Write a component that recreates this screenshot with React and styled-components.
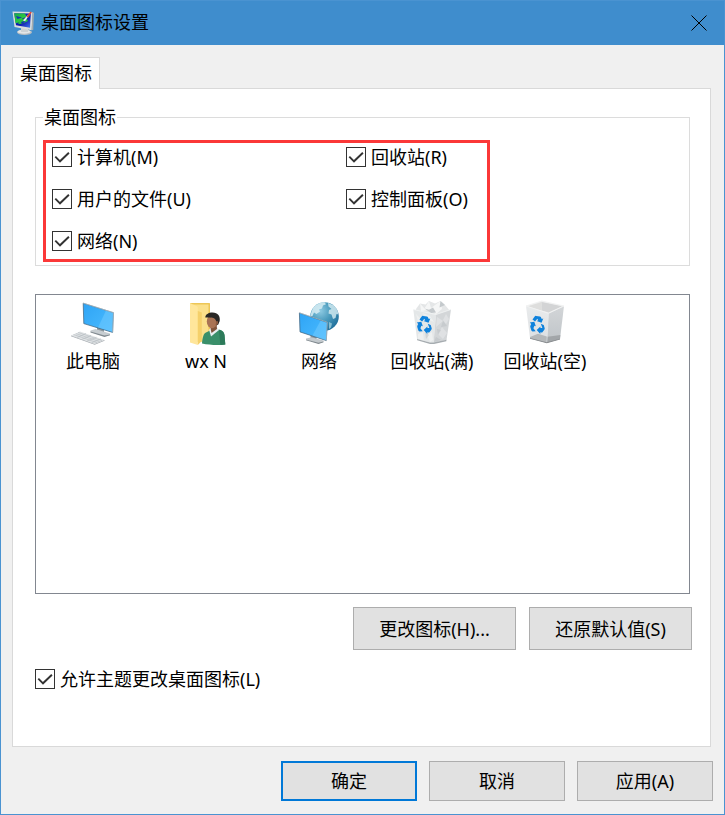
import React, { useState } from "react"
import styled, { createGlobalStyle } from "styled-components"


const GlobalStyle = createGlobalStyle`
  * {
    box-sizing: border-box;
  }
  body {
    margin: 0;
    font-family: "Noto Sans", "Noto Sans CJK SC", sans-serif;
    font-size: 18px;
    line-height: 24px;
    color: #000;
  }
  button, input {
    font: inherit;
    color: inherit;
  }
`

const Dialog = styled.div`
  display: flex;
  flex-direction: column;
  min-height: 100vh;
  background-color: #f0f0f0;
  border: 1px solid #4a93d1;
`

const TitleBar = styled.header`
  display: flex;
  align-items: center;
  height: 44px;
  padding: 0 11px;
  background-color: #3f8dcd;
`

const Title = styled.h1`
  flex: 1;
  margin: 0 0 0 5px;
  padding-bottom: 2px;
  font-size: 18px;
  font-weight: normal;
`

const CloseButton = styled.button`
  display: flex;
  align-items: center;
  justify-content: center;
  width: 28px;
  height: 28px;
  padding: 0;
  border: none;
  background: none;
`

const Content = styled.main`
  flex: 1;
  display: flex;
  flex-direction: column;
  padding: 12px 13px 0 11px;
`

const Tabs = styled.div`
  display: flex;
`

const Tab = styled.button`
  position: relative;
  height: 32px;
  margin-bottom: -1px;
  padding: 0 7px 2px;
  background-color: #fff;
  border: 1px solid #d9d9d9;
  border-bottom: none;
`

const Panel = styled.section`
  flex: 1;
  display: flex;
  flex-direction: column;
  padding: 16px 20px 55px 22px;
  background-color: #fff;
  border: 1px solid #d9d9d9;
`

const Group = styled.fieldset`
  min-width: 0;
  margin: 0 0 28px;
  padding: 11px 7px 3px;
  border: 1px solid #dcdcdc;
`

const Legend = styled.legend`
  padding: 0 1px;
`

const Highlight = styled.div`
  display: grid;
  grid-template-columns: 294px 1fr;
  row-gap: 18px;
  width: 70%;
  padding: 2px 0 6px 6px;
  border: 3px solid #fb3838;
`

const CheckLabel = styled.label`
  display: flex;
  align-items: center;
  gap: 5px;
  white-space: nowrap;
`

const Box = styled.span`
  display: grid;
  width: 20px;
  height: 20px;
`

const Input = styled.input`
  grid-area: 1 / 1;
  appearance: none;
  width: 20px;
  height: 20px;
  margin: 0;
  background-color: #fff;
  border: 1px solid #333;
`

const Tick = styled.svg`
  grid-area: 1 / 1;
  z-index: 1;
  pointer-events: none;
`

const IconList = styled.ul`
  flex: 1;
  display: grid;
  grid-template-columns: repeat(auto-fill, 112px);
  align-content: start;
  column-gap: 1px;
  margin: 0 0 13px;
  padding: 5px 0 0 1px;
  list-style-type: none;
  border: 1px solid #828790;
`

const IconItem = styled.li`
  display: flex;
  flex-direction: column;
  align-items: center;
  gap: 1px;
  white-space: nowrap;
`

const Actions = styled.div`
  display: flex;
  justify-content: flex-end;
  gap: 13px;
  margin: 0 -2px 17px 0;
`

const Footer = styled.footer`
  display: flex;
  justify-content: flex-end;
  gap: 12px;
  padding: 14px 11px 13px;
`

const Button = styled.button`
  width: ${props => props.$wide ? '163px' : '136px'};
  height: ${props => props.$wide ? '43px' : '40px'};
  padding: 0;
  background-color: #e1e1e1;
  border: ${props => props.$primary ? '2px solid #0078d7' : '1px solid #adadad'};
`


const AppIcon = () => (
  <svg width="24" height="26" viewBox="0 0 24 26" aria-hidden="true">
    <defs>
      <linearGradient id="app-screen" x1="0" y1="0" x2="1" y2="1">
        <stop offset="0" stopColor="#2540d8" />
        <stop offset="0.55" stopColor="#1018a8" />
        <stop offset="1" stopColor="#3f7cf0" />
      </linearGradient>
      <linearGradient id="app-leaf" x1="0" y1="0" x2="1" y2="1">
        <stop offset="0" stopColor="#1aa548" />
        <stop offset="1" stopColor="#35e23c" />
      </linearGradient>
    </defs>
    <ellipse cx="12.500" cy="22.300" rx="7.500" ry="2.700" fill="#b9bec1" />
    <ellipse cx="12" cy="21.700" rx="6.500" ry="2" fill="#e3e6e7" />
    <path d="M9 17l7 1v4H9z" fill="#cdd2d4" />
    <path d="M.5 1.500L20.500 2l-.8 18.300L2.500 17z" fill="#d9dddc" />
    <path d="M20.500 2l1.500 1-.8 17-1.500.3z" fill="#a5acaf" />
    <path d="M2.200 3.200L18.800 3.500 18 17.800 4 15.300z" fill="url(#app-screen)" />
    <path d="M2.200 3.200L13 3.400l1.500 3.600-4 1.200-1 2.800-3 1.500-3 .8z" fill="url(#app-leaf)" />
    <path d="M6 13.500c2-3.500 5-5.500 8.500-5l1.500 2.500c-2.500 1-6.500 3-8.500 3z" fill="#25c53c" />
    <path d="M4 6l6 1.500L5.500 9zM9 12l5-1.500-4 3.500z" fill="#132db9" />
    <path d="M11 10.500l5-6 1.200.8-4.200 6z" fill="#e6ebee" />
    <path d="M14.500 6.500l4-5 1.300.8-3.600 5.500z" fill="#dc4b3c" />
  </svg>
)

const Screen = ({ id, points, shine }) => (
  <>
    <defs>
      <linearGradient id={id} x1="0" y1="0" x2="1" y2="1">
        <stop offset="0" stopColor="#2ea4f5" />
        <stop offset="1" stopColor="#4cbcff" />
      </linearGradient>
    </defs>
    <polygon points={points} fill={`url(#${id})`} stroke="#3d5f78" strokeWidth="0.7" strokeLinejoin="round" />
    <polygon points={shine} fill="#79ceff" opacity="0.45" />
  </>
)

const ComputerIcon = () => (
  <svg width="48" height="48" viewBox="0 0 48 48" aria-hidden="true">
    <path d="M28 27l7 2v5l-7-2z" fill="#8d979d" />
    <path d="M21.500 30.500l5-1.500 14.500 4.500v1.500l-5.500 1.500-14-4.500z" fill="#c7cdd1" />
    <path d="M21.500 31.500l14 4 5.500-1v.800l-5.500 1.700-14-4.600z" fill="#818a90" />
    <Screen id="pc-screen" points="14.200,3.200 44.500,12.700 43.600,32.400 14.800,23.600" shine="44,13.200 43.200,31.700 29,27.500 37,10.600" />
    <path d="M14 3l30.500 9.700-.9 19.700" fill="none" stroke="#c0c9cf" strokeWidth="0.6" />
    <path d="M2 35.500l9-4 24.500 8.500-9.800 4z" fill="#e0e3e5" />
    <path d="M2 35.500l23.700 8.500 9.800-4v.8l-9.800 4L2 36.300z" fill="#a5abb0" />
    <path d="M4.500 34.500l23.800 8.300M6.800 33.500l23.900 8.200M9 32.400l24 8.200M8 37.500l9-4M13 39.300l9-3.900M18 41.100l9.500-3.900M22.500 42.800l9.500-3.900" stroke="#b4babf" strokeWidth="0.6" />
  </svg>
)

const UserIcon = () => (
  <svg width="48" height="48" viewBox="0 0 48 48" aria-hidden="true">
    <path d="M8 3h19.500q.5 0 .5.500V42H8z" fill="#edc657" />
    <path d="M11 4.500h15.500V42H11z" fill="#fbe08b" />
    <path d="M8 3l7.200 3.500q.6.300.6 1V45L8 42.500z" fill="#ffe69b" />
    <path d="M15.800 11l4 1.500V41l-4 4z" fill="#f5d06a" />
    <path d="M20 43.500c.5-6 1.500-10 4-11l4-2 8-1c4 .5 6 2 6.500 5.500l.8 9.500c-7 1-16 .5-23.300-1z" fill="#3a8f6a" />
    <path d="M37 29.800c3 .8 5 2.200 5.500 5.200l.8 9.500c-1.600.3-3.500.3-5 .3z" fill="#2d7a5a" />
    <path d="M27 29.500l2 7 8-6.500-2-3z" fill="#e9eef0" />
    <path d="M28 26l1.500 7 5.500-4-.5-6z" fill="#80543b" />
    <ellipse cx="30" cy="21.500" rx="5.200" ry="6.800" fill="#a97354" />
    <path d="M23.300 17.500c0-3 3.200-5 7.200-5 5.500 0 8 4 7.200 8.500l-1.400 3.500-2 1c.5-3 .3-4.500-1.300-6.500-1.500-1.700-5-1.300-9.700-1.500z" fill="#292725" />
    <path d="M34 21.500c1.500-1.500 3 .5 1.500 3l-1.800.7z" fill="#8b5a3e" />
  </svg>
)

const NetworkIcon = () => (
  <svg width="48" height="48" viewBox="0 0 48 48" aria-hidden="true">
    <defs>
      <radialGradient id="globe" cx="0.350" cy="0.300" r="0.750">
        <stop offset="0" stopColor="#8fcbe3" />
        <stop offset="0.500" stopColor="#4b9bbd" />
        <stop offset="1" stopColor="#206f9b" />
      </radialGradient>
    </defs>
    <circle cx="29.500" cy="16.500" r="14.300" fill="url(#globe)" />
    <path d="M18.500 7.500c3-3.500 7-5.300 11-5.300l1.500 2-3 1.300-1 3-3 1 1 2-3.500 2.500-2.500-1.500-1.500 3.500-2 .5c.3-3.500 1.500-6.500 3-9z" fill="#d8edf3" opacity="0.850" />
    <path d="M33 3l5 2c3.200 2.500 5 5.800 5.500 9.500l-2-.5-1 4-2.500 1-1.500-4.500-3-1 .5-3.500 2.500-1-3-2.500z" fill="#d8edf3" opacity="0.800" />
    <path d="M34 22l3 1.500-1 4-2 1.500z" fill="#87bed2" />
    <path d="M15.500 35l6 2v4.500l-6-2z" fill="#8b969d" />
    <path d="M11 38.500l5.500-1.200 12 3.200v1.500L23.500 43.500 11 39.500z" fill="#c3c9cd" />
    <path d="M11 39.500l12.500 3.200 5-1.200v.8l-5 1.700L11 40.300z" fill="#7f888e" />
    <Screen id="net-screen" points="4.400,12.900 32.300,22.400 31.300,40.600 5,31.900" shine="31.800,22.800 30.900,40 17.500,35.500 25.500,20.700" />
    <path d="M4.200 12.700l28.100 9.500-1 18.400" fill="none" stroke="#c0c9cf" strokeWidth="0.600" />
  </svg>
)

const RecycleMark = () => (
  <g fill="#0f82dc">
    <path d="M11.500 19.500l2.200-3q.5-.8 1.500-.6l3.700.5q.7.100 1 .8l.9 1.800 1.500-.5-1.800 4.200-4.900-1.600 1.600-.8-.9-1.500-2.200 2.700z" />
    <path d="M8.800 22.500l4.500-.8 1.500 4.500-1.400-.4-1 2.400 2.300 3.100-3.200.1q-.9-.1-1.100-.8l-1.100-3.600q-.2-.7.100-1.300l.8-1.600z" />
    <path d="M19.800 23.700l2.900 1.200 1 3.300q.1.800-.4 1.500l-1.700 2.200q-.5.600-1.300.5l-1-.2v1.800l-3.600-4 3.700-3.600v1.600l2-.1z" />
  </g>
)

const FullBinIcon = () => (
  <svg width="48" height="48" viewBox="0 0 48 48" aria-hidden="true">
    <path d="M8 9l4-5.500 5.500 1L21 1l6 2.500 5.500-2.500L37 5l2.500 3L42 11l-14 5L8 11z" fill="#e4e6e7" />
    <path d="M12 3.500l4.500 5L21 1l2 7 9.500-7 1.500 8-6 5-7-4-8 1z" fill="#f5f6f6" />
    <path d="M16.500 8.500l4.500 1.300 4-2.300 3 5-5 .5zM32.500 1l-1 6.500L37 5z" fill="#c4c9cc" />
    <path d="M5.300 9.500l22.700 5-2.500 28.300-3.500-.3-13-3.500z" fill="#e4e7e8" />
    <path d="M28 14.500l15-5-4.500 30.500-13 2.800z" fill="#d3d6d8" />
    <path d="M8 14l5 5-3 3zM14 13l8 3 4 6-5-2zM10 34l5-2 1 9-6-2zM19 35l5-3 1 8-3 2z" fill="#eef0f0" />
    <path d="M29 17l6 4-7 6zM34 27l5 6-4 6-5-5zM38 14l3 5-3 5-3-4z" fill="#dfe1e3" />
    <path d="M29 29l4 1-3 5zM35 21l4 5-6 1zM28 37l5 3-7 2zM17 31l4 4-3 4zM9 24l3 5-2 2z" fill="#bbc0c4" opacity="0.500" />
    <path d="M9 39l13 3.500h3.500l13-2.800-.2 1.500L26 44h-4L9.200 40.200z" fill="#a6acb0" />
    <path d="M5.300 9.500L28 14.500l15-5" fill="none" stroke="#f3f5f5" strokeWidth="0.800" />
    <RecycleMark />
  </svg>
)

const EmptyBinIcon = () => (
  <svg width="48" height="48" viewBox="0 0 48 48" aria-hidden="true">
    <defs>
      <linearGradient id="bin-left" x1="0" y1="0" x2="0" y2="1">
        <stop offset="0" stopColor="#e9ebec" />
        <stop offset="1" stopColor="#dcdfe2" />
      </linearGradient>
      <linearGradient id="bin-right" x1="0" y1="0" x2="0" y2="1">
        <stop offset="0" stopColor="#d3d6d8" />
        <stop offset="1" stopColor="#bfc4c8" />
      </linearGradient>
    </defs>
    <path d="M5 6L20.700 1 43 6l-15.500 7.300z" fill="#ededed" />
    <path d="M7 6.300L20.700 2v8.500l-4-1z" fill="#dededd" />
    <path d="M20.700 2L41 6.300l-13.500 6.200-6.800-2z" fill="#d3d4d5" />
    <path d="M5 6l22.500 7.300-1.700 29.400L9 38z" fill="url(#bin-left)" />
    <path d="M27.500 13.300L43 6l-4 33-13.200 3.700z" fill="url(#bin-right)" />
    <path d="M9 37l8-3.300 9.600 3-.8 6L9 38.500z" fill="#b5b8ba" />
    <path d="M26.600 36.700L39.300 35 39 39l-13.200 3.700z" fill="#a2a6a9" />
    <path d="M5 6L20.700 1 43 6l-15.500 7.300z" fill="none" stroke="#f1f2f2" strokeWidth="0.900" />
    <path d="M27.500 13.300l-1.700 29.400" stroke="#e9ebed" strokeWidth="0.500" />
    <path d="M9 38l16.800 4.200L39 38.700v.8l-13.200 3.700L9 38.800z" fill="#85898c" />
    <RecycleMark />
  </svg>
)


const icons = [
  { label: "此电脑", Icon: ComputerIcon },
  { label: "wx N", Icon: UserIcon },
  { label: "网络", Icon: NetworkIcon },
  { label: "回收站(满)", Icon: FullBinIcon },
  { label: "回收站(空)", Icon: EmptyBinIcon },
]

const options = [
  "计算机(M)",
  "回收站(R)",
  "用户的文件(U)",
  "控制面板(O)",
  "网络(N)",
]

const Checkbox = ({ children }) => {
  const [checked, setChecked] = useState(true);
  return (
    <CheckLabel>
      <Box>
        <Input type="checkbox" checked={checked} onChange={() => setChecked(!checked)} />
        {checked && (
          <Tick width="20" height="20" viewBox="0 0 20 20" aria-hidden="true">
            <path d="M3.300 9.600L8 14.300l8.900-8.600" fill="none" stroke="#333" strokeWidth="1.900" />
          </Tick>
        )}
      </Box>
      <span>{children}</span>
    </CheckLabel>
  )
}

const App = () => {
  return (
    <>
      <GlobalStyle />
      <Dialog role="dialog" aria-labelledby="title">
        <TitleBar>
          <AppIcon />
          <Title id="title">桌面图标设置</Title>
          <CloseButton aria-label="关闭">
            <svg width="16" height="16" viewBox="0 0 16 16" aria-hidden="true">
              <path d="M.5.5l15 15M15.500.5l-15 15" stroke="#000" strokeWidth="1" />
            </svg>
          </CloseButton>
        </TitleBar>
        <Content>
          <Tabs role="tablist">
            <Tab role="tab" aria-selected="true">桌面图标</Tab>
          </Tabs>
          <Panel>
            <Group>
              <Legend>桌面图标</Legend>
              <Highlight>
                {options.map(option => <Checkbox key={option}>{option}</Checkbox>)}
              </Highlight>
            </Group>
            <IconList>
              {icons.map(({ label, Icon }) => (
                <IconItem key={label}>
                  <Icon />
                  <span>{label}</span>
                </IconItem>
              ))}
            </IconList>
            <Actions>
              <Button $wide>更改图标(H)...</Button>
              <Button $wide>还原默认值(S)</Button>
            </Actions>
            <Checkbox>允许主题更改桌面图标(L)</Checkbox>
          </Panel>
        </Content>
        <Footer>
          <Button $primary>确定</Button>
          <Button>取消</Button>
          <Button>应用(A)</Button>
        </Footer>
      </Dialog>
    </>
  )
}

export default App
